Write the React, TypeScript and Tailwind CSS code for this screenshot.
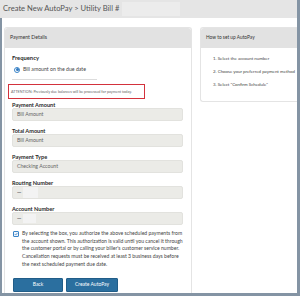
import React from "react";

const Label = ({ children, className = "" }: { children: React.ReactNode; className?: string }) => (
  <div className={`h-[7px] leading-[7px] text-[5.6px] font-bold text-[#2a2a2a] ${className}`}>{children}</div>
);

const Field = ({ children }: { children: React.ReactNode }) => (
  <div className="h-[13px] w-[171px] rounded-[2px] bg-[#ebebe7] border border-[#e2e2de] flex items-center pl-[4px] text-[5.2px] text-[#666]">
    {children}
  </div>
);

export default function App() {
  return (
    <div className="w-[300px] h-[296px] bg-white overflow-hidden font-['Lato'] text-[#333] flex flex-col border-r-[3px] border-b-[3px] border-[#8494a4]">
      <div className="h-[18px] shrink-0 bg-[#e5e5e5] flex items-center pl-[3px] text-[7.6px] text-[#555]">
        <span>Create New AutoPay &gt; Utility Bill #</span>
        <span className="ml-[3px] h-[14px] w-[58px] bg-[#ececec]" />
      </div>
      <div className="flex-1 min-h-0 border-l-2 border-[#8494a4] flex gap-[8px] pl-[2px] pt-[9px]">
        {/* Left card */}
        <div className="w-[188px] shrink-0 flex flex-col rounded-t-[3px] border border-b-0 border-[#e4e4e4]">
          <div className="h-[20px] shrink-0 bg-[#e2e2e2] rounded-t-[3px] flex items-center pl-[5px] text-[5.2px] text-[#333]">
            Payment Details
          </div>
          <div className="flex flex-col pl-[7px]">
            <div className="mt-[6px] h-[8px] leading-[8px] text-[5.8px] font-bold text-[#2a2a2a]">Frequency</div>
            <div className="mt-[3px] flex items-center gap-[3px] pl-[2px] h-[9px]">
              <span className="w-[6px] h-[6px] rounded-full border border-[#3a84c8] flex items-center justify-center bg-white">
                <span className="w-[3px] h-[3px] rounded-full bg-[#2f78c0]" />
              </span>
              <span className="text-[5.2px] text-[#444]">Bill amount on the due date</span>
            </div>
            <div className="mt-[5px] h-px w-[85px] bg-[#dcdcdc]" />
            <div className="mt-[4px] -ml-[4px] w-[137px] h-[15px] border-[1.5px] border-[#d3323c] flex items-center pl-[2px] text-[3.7px] text-[#666] whitespace-nowrap">
              ATTENTION: Previously due balances will be processed for payment today.
            </div>
            <Label className="mt-[2px]">Payment Amount</Label>
            <Field>Bill Amount</Field>
            <Label className="mt-[6px]">Total Amount</Label>
            <Field>Bill Amount</Field>
            <Label className="mt-[6px]">Payment Type</Label>
            <Field>Checking Account</Field>
            <Label className="mt-[6px]">Routing Number</Label>
            <Field>
              <span className="text-[5px] tracking-[-0.8px] text-[#888] leading-none">·······</span>
              <span className="ml-[2px] h-[11px] w-[15px] bg-[#f3f3f3]" />
            </Field>
            <Label className="mt-[6px]">Account Number</Label>
            <Field>
              <span className="text-[5px] tracking-[-0.8px] text-[#888] leading-none">·······</span>
              <span className="ml-[2px] h-[9px] w-[13px] bg-[#f3f3f3]" />
            </Field>
            <div className="mt-[5px] flex gap-[3px] pl-[1px]">
              <span className="mt-[1px] w-[6px] h-[6px] shrink-0 rounded-[1px] border border-[#3a84c8] bg-[#eef5fc] flex items-center justify-center">
                <svg viewBox="0 0 10 10" className="w-[6px] h-[6px]">
                  <path d="M1.8 5.2 L4.2 7.6 L8.6 2.4" fill="none" stroke="#2f78c0" strokeWidth="1.8" />
                </svg>
              </span>
              <p className="w-[162px] text-[5.1px] leading-[7.7px] text-[#444]">
                By selecting the box, you authorize the above scheduled payments from the account shown. This authorization is valid until you cancel it through the customer portal or by calling your biller's customer service number. Cancellation requests must be received at least 3 business days before the next scheduled payment due date.
              </p>
            </div>
            <div className="mt-[9px] flex gap-[3px] pl-[1px]">
              <button className="w-[50px] h-[14px] rounded-[1px] bg-[#2b6f9f] border border-[#215d88] text-white text-[5px] flex items-center justify-center">
                Back
              </button>
              <button className="w-[52px] h-[14px] rounded-[1px] bg-[#2b6f9f] border border-[#215d88] text-white text-[5px] flex items-center justify-center">
                Create AutoPay
              </button>
            </div>
          </div>
        </div>
        {/* Right card */}
        <div className="flex-1 self-start flex flex-col rounded-[3px] border border-[#e4e4e4] border-r-0 rounded-r-none">
          <div className="h-[20px] bg-[#e2e2e2] rounded-tl-[3px] flex items-center pl-[5px] text-[4.8px] text-[#333]">
            How to set up AutoPay
          </div>
          <div className="flex flex-col pl-[12px] pt-[7px] pb-[13px] gap-[6px] text-[4.4px] text-[#444] whitespace-nowrap">
            <div className="h-[7px] leading-[7px]">1. Select the account number</div>
            <div className="h-[7px] leading-[7px]">2. Choose your preferred payment method</div>
            <div className="h-[7px] leading-[7px]">3. Select "Confirm Schedule"</div>
          </div>
        </div>
      </div>
    </div>
  );
}
